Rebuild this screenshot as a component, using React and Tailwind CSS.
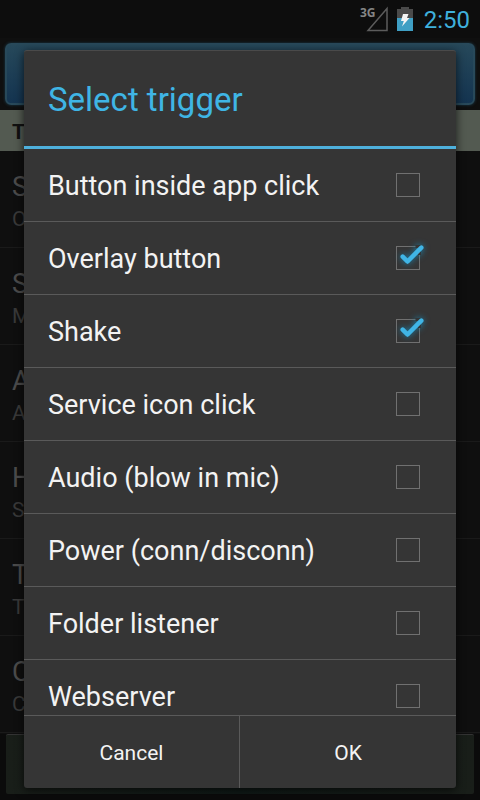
import { useState } from "react";

const triggers = [
  { id: "button", label: "Button inside app click", checked: false },
  { id: "overlay", label: "Overlay button", checked: true },
  { id: "shake", label: "Shake", checked: true },
  { id: "service", label: "Service icon click", checked: false },
  { id: "audio", label: "Audio (blow in mic)", checked: false },
  { id: "power", label: "Power (conn/disconn)", checked: false },
  { id: "folder", label: "Folder listener", checked: false },
  { id: "webserver", label: "Webserver", checked: false },
];

const settings = [
  ["S", "O"],
  ["S", "M"],
  ["A", "A"],
  ["H", "S"],
  ["T", "T"],
  ["C", "C"],
];

function StatusBar() {
  return (
    <header className="flex h-[38px] shrink-0 items-center justify-end bg-[#0d0d0d] pr-2.5">
      <svg width="30" height="28" viewBox="0 0 30 28" className="mr-2" aria-hidden="true">
        <text x="1" y="12" fontFamily="Open Sans, sans-serif" fontSize="12" fontWeight="700" fill="#858585">
          3G
        </text>
        <path d="M28 3.5 V25.5 H9 Z" fill="none" stroke="#5c5c5c" strokeWidth="1.5" />
      </svg>
      <svg width="16" height="24" viewBox="0 0 16 24" className="mr-[11px]" aria-hidden="true">
        <path d="M4 0 H12 V2 H16 V11 H0 V2 H4 Z" fill="#4a4a4a" />
        <path d="M0 11 H16 V24 H0 Z" fill="#3f9fc4" />
        <path d="M6 7 H11.5 L10 11 H12.5 L5 19.5 L6.8 14 H4 Z" fill="#f4f4f4" />
      </svg>
      <time className="pt-0.5 text-2xl leading-7 text-[#3fb0dc]">2:50</time>
    </header>
  );
}

function SettingsScreen() {
  return (
    <main className="flex flex-col bg-[#0f0f0f]">
      <div className="px-[5px] pt-[5px] pb-[5px]">
        <div className="h-[62px] rounded-md border-2 border-[#28495a] bg-linear-to-b from-[#26485a] to-[#143450] shadow-[0_0_3px_#1c3c4c]" />
      </div>
      <h2 className="h-[41px] bg-[#535a51] px-3 text-[21px] leading-[44px] font-bold text-[#111]">T</h2>
      <ul>
        {settings.map(([title, summary], i) => (
          <li key={i} className="h-[97px] border-b border-[#1a1a1a] px-3 pt-[18px]">
            <p className="text-[27px] leading-9 text-[#4b4b4b]">{title}</p>
            <p className="text-[21px] leading-7 text-[#393939]">{summary}</p>
          </li>
        ))}
      </ul>
    </main>
  );
}

function TriggerRow({ trigger, onToggle }) {
  return (
    <li className="h-[73px] shrink-0 border-b border-[#5a5a5a]">
      <label className="flex h-full items-center justify-between pr-9 pl-6">
        <span className="pt-0.5 text-[27px] leading-9 text-[#f3f3f3]">{trigger.label}</span>
        <span className="relative size-6">
          <input
            type="checkbox"
            checked={trigger.checked}
            onChange={onToggle}
            className="block size-6 appearance-none border border-[#707070]"
          />
          {trigger.checked && (
            <svg
              width="36"
              height="32"
              viewBox="0 0 36 32"
              className="pointer-events-none absolute -top-1 left-0 drop-shadow-[0_0_3px_#1b7fa8]"
              aria-hidden="true"
            >
              <path d="M19.5 4.5 H23.5 V13" fill="none" stroke="#353535" strokeWidth="3" />
              <path
                d="M6.7 14.7 L11.5 19.5 L25.3 5.7"
                fill="none"
                stroke="#40b5e6"
                strokeWidth="4.5"
                strokeLinejoin="round"
                strokeLinecap="round"
              />
            </svg>
          )}
        </span>
      </label>
    </li>
  );
}

export default function App() {
  const [items, setItems] = useState(triggers);
  const toggle = (id) =>
    setItems((list) => list.map((t) => (t.id === id ? { ...t, checked: !t.checked } : t)));

  return (
    <div className="relative flex h-screen flex-col overflow-hidden bg-[#0f0f0f] font-[Roboto,sans-serif]">
      <StatusBar />
      <SettingsScreen />
      <div className="absolute inset-x-0 bottom-0 bg-[#0b0b0b] px-1.5 pb-1.5">
        <div className="h-[60px] rounded-xs border-t border-[#333] bg-linear-to-r from-[#191e19] via-[#101a17] to-[#191e19]" />
      </div>
      <div className="absolute inset-0 px-6 pt-[50px] pb-3">
        <section
          role="dialog"
          aria-labelledby="dialog-title"
          className="flex h-full flex-col rounded-[3px] border-t border-[#4a4a4a] bg-[#353535] shadow-[0_2px_10px_#000000b0]"
        >
          <h1 id="dialog-title" className="h-[98px] shrink-0 border-b-3 border-[#4eb0dc] px-6 text-[33px] leading-[98px] text-[#3fb5e5]">
            Select trigger
          </h1>
          <ul className="flex min-h-0 flex-1 flex-col overflow-hidden">
            {items.map((t) => (
              <TriggerRow key={t.id} trigger={t} onToggle={() => toggle(t.id)} />
            ))}
          </ul>
          <footer className="grid h-[73px] shrink-0 grid-cols-2 border-t border-[#5a5a5a] text-[21px] text-[#f3f3f3]">
            <button type="button" className="border-r border-[#5a5a5a] pt-1">Cancel</button>
            <button type="button" className="pt-1">OK</button>
          </footer>
        </section>
      </div>
    </div>
  );
}
